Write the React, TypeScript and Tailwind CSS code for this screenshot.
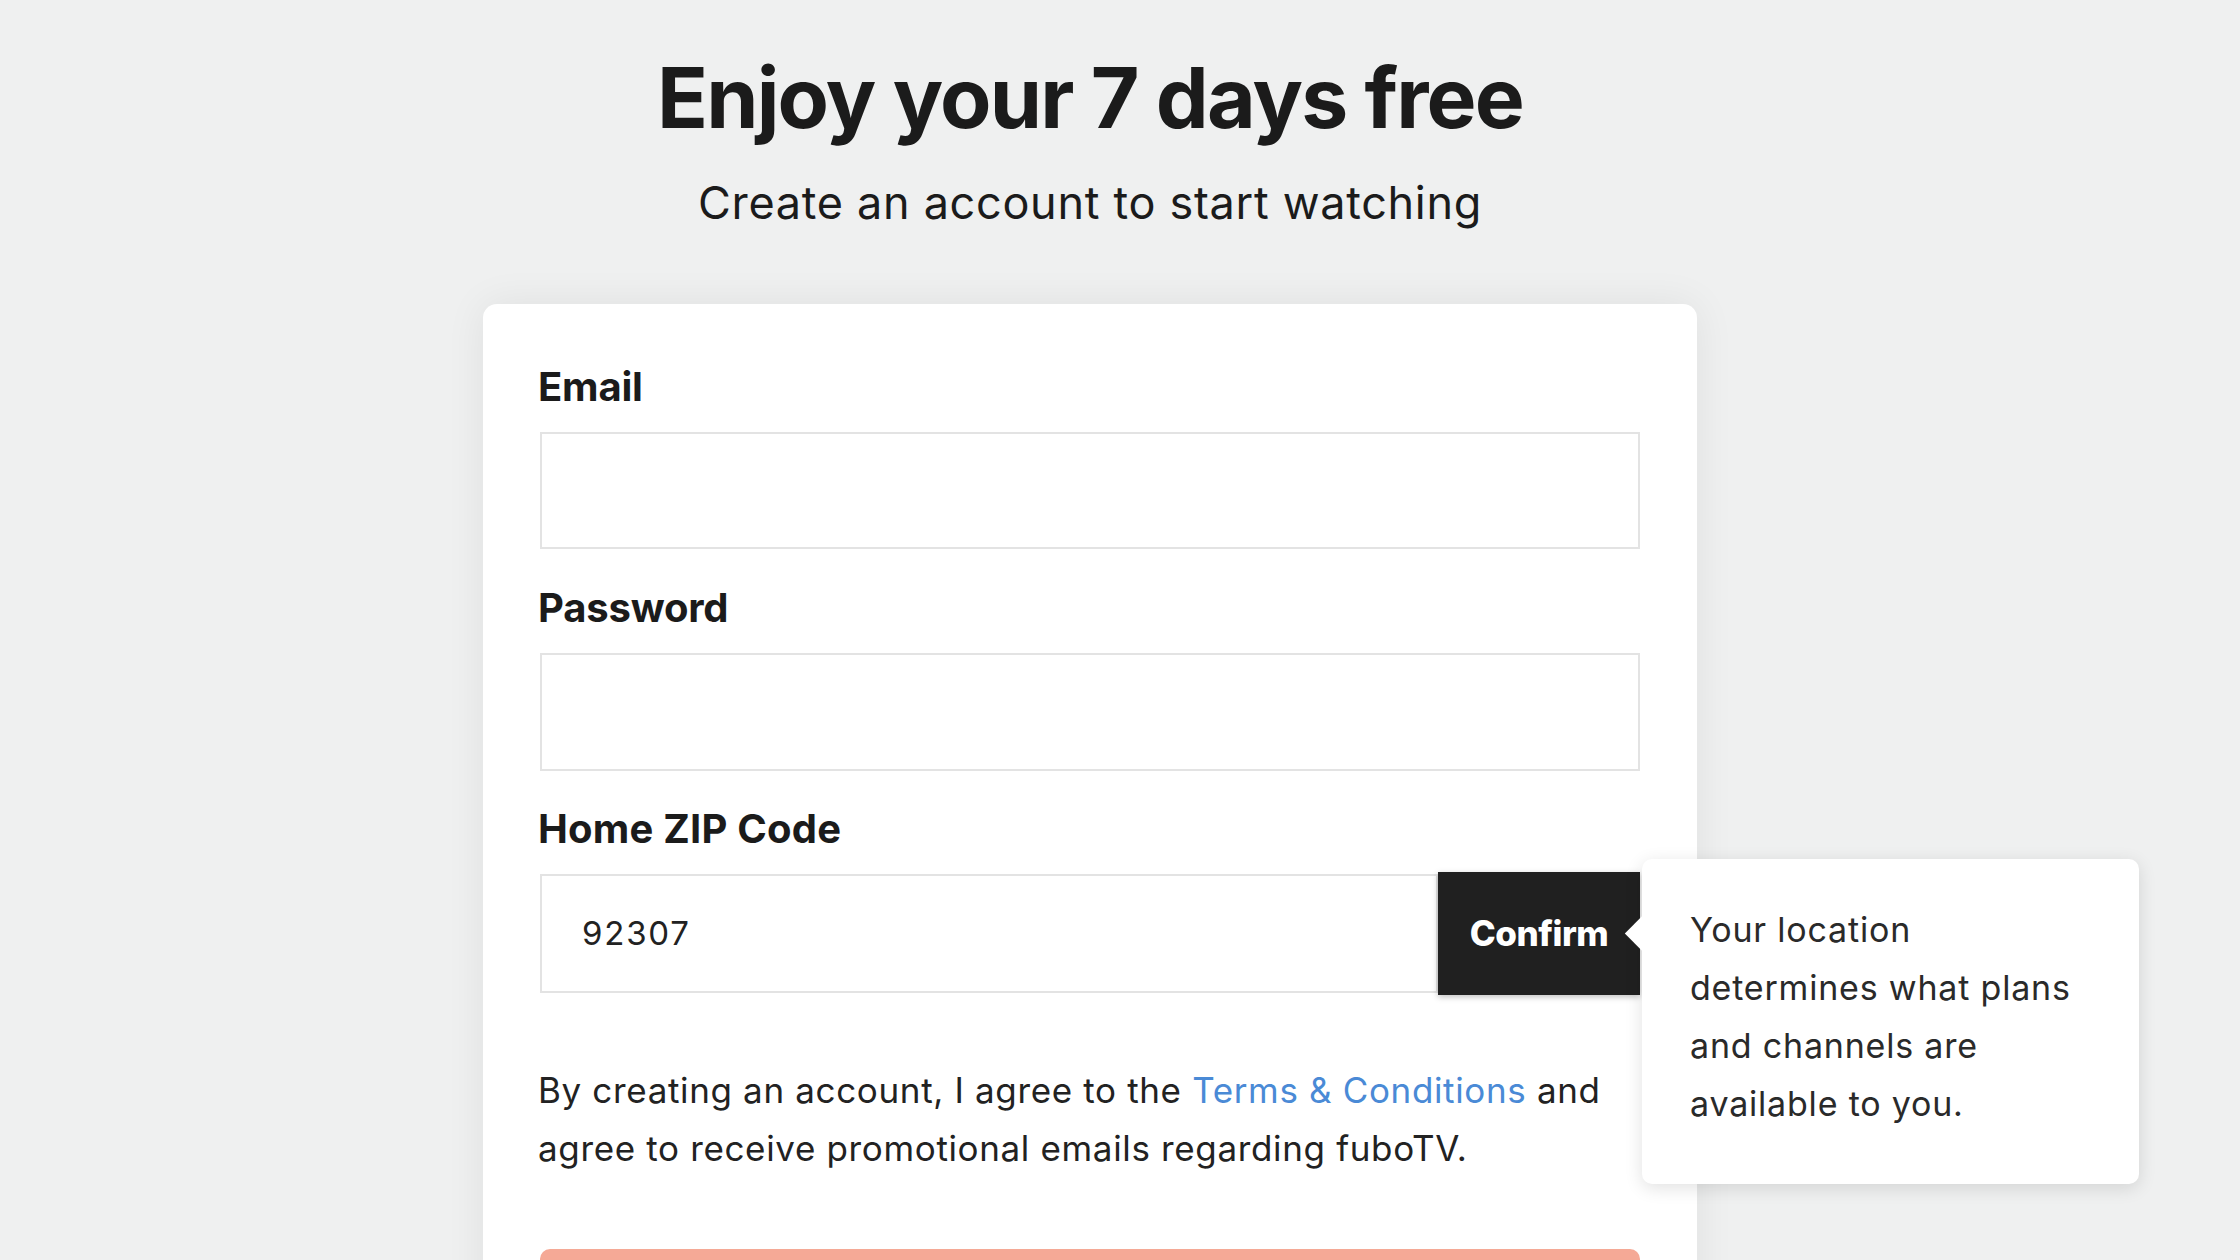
import React from "react";

export default function App() {
  const font = { fontFamily: "Inter, 'Noto Sans', sans-serif" };
  return (
    <div className="w-[2240px] h-[1260px] overflow-hidden bg-[#eff0f0] text-[#1b1b1b]" style={font}>
      <div className="ml-[483px] w-[1214px] flex flex-col items-center">
        <h1 className="mt-[48px] text-[84px] leading-[100px] font-bold tracking-[-1.8px]">Enjoy your 7 days free</h1>
        <p className="mt-[27px] text-[45px] leading-[56px] font-normal tracking-[0.7px]">Create an account to start watching</p>
        <div className="mt-[73px] w-full bg-white rounded-[14px] shadow-[0_0_40px_rgba(0,0,0,0.07)] px-[57px] pt-[58px] pb-[40px]">
          <label className="block -ml-[2px] text-[40px] leading-[50px] font-bold tracking-[-0.2px]">Email</label>
          <div className="mt-[20px] h-[117px] border-2 border-[#e3e3e3] bg-white"></div>
          <label className="block -ml-[2px] mt-[34px] text-[40px] leading-[50px] font-bold tracking-[-0.2px]">Password</label>
          <div className="mt-[20px] h-[118px] border-2 border-[#e3e3e3] bg-white"></div>
          <label className="block -ml-[2px] mt-[33px] text-[40px] leading-[50px] font-bold tracking-[0.2px]">Home ZIP Code</label>
          <div className="relative mt-[20px] flex items-center h-[119px]">
            <div className="flex-1 h-full border-2 border-[#e3e3e3] flex items-center pl-[40px] text-[33px] tracking-[1.8px] text-[#222]">92307</div>
            <button className="w-[202px] h-[123px] bg-[#202020] text-white text-[35px] font-extrabold tracking-[-0.5px] shadow-[0_2px_6px_rgba(0,0,0,0.25)]">Confirm</button>
            <div className="absolute left-[1102px] top-[-15px] w-[497px] h-[325px] bg-white rounded-[10px] shadow-[0_4px_18px_rgba(0,0,0,0.12)] pl-[48px] pt-[42px] text-[34px] leading-[58px] tracking-[0.8px] text-[#2a2a2a]">
              <div className="absolute left-[-12px] top-[62px] w-[25px] h-[25px] bg-white rotate-45"></div>
              <p className="relative">Your location<br />determines what plans<br />and channels are<br />available to you.</p>
            </div>
          </div>
          <p className="-ml-[2px] mt-[68px] text-[35px] leading-[58px] tracking-[0.65px] text-[#222]">
            By creating an account, I agree to the <span className="text-[#4a8ad6]">Terms &amp; Conditions</span> and<br />agree to receive promotional emails regarding fuboTV.
          </p>
          <div className="mt-[72px] h-[110px] bg-[#f5a996] rounded-[10px]"></div>
        </div>
      </div>
    </div>
  );
}
